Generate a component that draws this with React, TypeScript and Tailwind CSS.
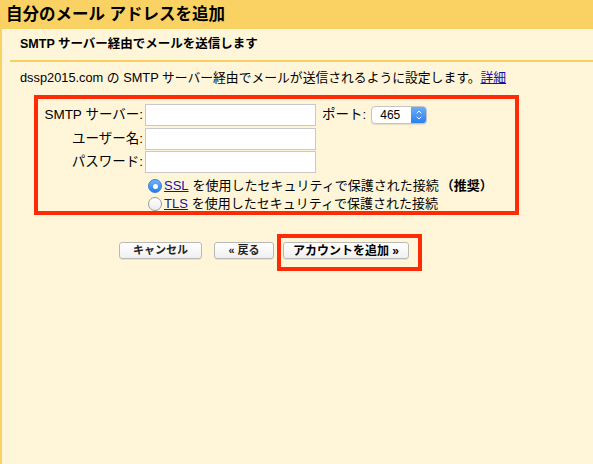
import { ChevronUp, ChevronDown } from 'lucide-react'

const font = { fontFamily: '"Liberation Sans", "Noto Sans CJK JP", sans-serif' }

function Field({ label }: { label: string }) {
  return (
    <>
      <label className="text-right text-[13.5px] leading-[22px] text-black pr-[1px]">{label}</label>
      <input className="h-[22px] w-[171px] bg-white border border-[#c8c8c8] outline-none" />
    </>
  )
}

function Radio({ checked, link, strong }: { checked?: boolean; link: string; strong?: boolean }) {
  return (
    <div className="flex items-center h-[18px] text-[13px] text-black">
      {checked ? (
        <span className="w-[14px] h-[14px] rounded-full bg-gradient-to-b from-[#6cb3fa] to-[#1f7ff0] border border-[#3a7bd5] flex items-center justify-center mr-[2px]">
          <span className="w-[5px] h-[5px] rounded-full bg-white" />
        </span>
      ) : (
        <span className="w-[14px] h-[14px] rounded-full bg-gradient-to-b from-white to-[#ececec] border border-[#9a9a9a] mr-[2px]" />
      )}
      <a className="text-[#1a0dab] underline">{link}</a>
      <span className="ml-[4px]">を使用したセキュリティで保護された接続</span>
      {strong && <span className="font-bold ml-[2px]">（推奨）</span>}
    </div>
  )
}

function Btn({ children, className = '' }: { children: React.ReactNode; className?: string }) {
  return (
    <button
      className={`block h-[17px] rounded-[3px] border border-[#b8b8b8] bg-gradient-to-b from-white to-[#f0f0f0] text-[11px] font-bold text-[#222] leading-none shadow-[0_1px_0_rgba(0,0,0,0.08)] ${className}`}
    >
      {children}
    </button>
  )
}

export default function App() {
  return (
    <div className="min-h-screen flex flex-col bg-[#fff6d9]" style={font}>
      <div className="h-[29px] bg-[#fad264] px-[6px] flex items-center">
        <h1 className="text-[16.5px] font-bold text-black">自分のメール アドレスを追加</h1>
      </div>
      <div className="flex-1 border-l-2 border-[#fad264]">
        <div className="ml-[8px] h-[33px] border-b-2 border-[#f7d061] pl-[10px] flex items-center">
          <h2 className="text-[12.5px] font-bold text-black">SMTP サーバー経由でメールを送信します</h2>
        </div>
        <p className="mt-[7px] pl-[18px] text-[12.8px] text-black leading-[18px]">
          dssp2015.com の SMTP サーバー経由でメールが送信されるように設定します。
          <a className="text-[#1a0dab] underline">詳細</a>
        </p>

        <div className="ml-[32px] mt-[8px] w-[485px] h-[120px] border-4 border-[#ff2a06] pt-[5px]">
          <div className="flex">
            <div className="grid grid-cols-[106px_171px] gap-y-[1.5px] gap-x-[1px]">
              <Field label="SMTP サーバー:" />
              <Field label="ユーザー名:" />
              <Field label="パスワード:" />
            </div>
            <div className="flex items-start ml-[6px] pt-[2px]">
              <span className="text-[13.5px] text-black leading-[18px]">ポート:</span>
              <div className="ml-[5px] h-[18px] w-[56px] flex rounded-[4px] border border-[#c4c4c4] bg-white overflow-hidden shadow-[0_1px_1px_rgba(0,0,0,0.1)]">
                <span className="flex-1 text-[12px] leading-[16px] pl-[8px] text-black">465</span>
                <span className="w-[15px] bg-gradient-to-b from-[#6aaef8] to-[#2a7ff0] flex flex-col items-center justify-center text-white">
                  <ChevronUp size={8} strokeWidth={3} className="-mb-[1px]" />
                  <ChevronDown size={8} strokeWidth={3} className="-mt-[1px]" />
                </span>
              </div>
            </div>
          </div>
          <div className="ml-[110px] mt-[4px] flex flex-col gap-[0px]">
            <Radio checked link="SSL" strong />
            <Radio link="TLS" />
          </div>
        </div>

        <div className="flex items-start mt-[19px] ml-[117px]">
          <Btn className="w-[83px] mt-[8px]">キャンセル</Btn>
          <Btn className="w-[60px] ml-[12px] mt-[8px]">« 戻る</Btn>
          <div className="ml-[3px] flex border-4 border-[#ff2a06] pl-[2px] pr-[9px] pt-[4px] pb-[8px]">
            <Btn className="w-[126px] text-[12px] text-black">アカウントを追加 »</Btn>
          </div>
        </div>
      </div>
    </div>
  )
}
